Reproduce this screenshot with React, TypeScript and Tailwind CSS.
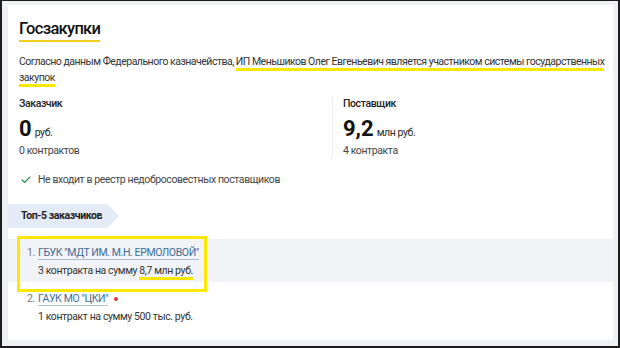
import { Check } from "lucide-react";

const customers = [
  { n: 1, name: "ГБУК \"МДТ ИМ. М.Н. ЕРМОЛОВОЙ\"", pre: "3 контракта на сумму ", sum: "8,7 млн руб.", marked: true },
  { n: 2, name: "ГАУК МО \"ЦКИ\"", pre: "1 контракт на сумму ", sum: "500 тыс. руб.", marked: false },
];

const App = () => {
  return (
    <div
      className="w-[620px] h-[348px] overflow-hidden bg-[#eef0f3] border-l-2 border-r-2 border-t border-b-2 border-[#1c1c1c] pl-[6px] pr-[5px] pt-[4px] text-[#2a2a2a] text-[10.5px] tracking-[-0.4px]"
      style={{ fontFamily: "Roboto, 'Liberation Sans', sans-serif" }}
    >
      <div className="bg-white h-[335px]">
        {/* Title */}
        <div className="pl-[11px] pt-[14px]">
          <h1 className="inline-block text-[16.5px] leading-[20px] tracking-[-0.7px] font-medium text-[#111] border-b-2 border-[#f2cf1d] pb-[1px]">
            Госзакупки
          </h1>
        </div>

        {/* Intro text */}
        <p className="pl-[11px] mt-[12px] leading-[16px] tracking-[-0.5px] text-[#333]">
          Согласно данным Федерального казначейства,{" "}
          <span className="border-b-[3px] border-[#f8e800]">
            ИП Меньшиков Олег Евгеньевич является участником системы государственных закупок
          </span>
        </p>

        {/* Stats */}
        <div className="flex mt-[11px]">
          <div className="w-[325px] pl-[11px] border-r border-[#eceef1]">
            <div className="leading-[14px] font-medium text-[#222]">Заказчик</div>
            <div className="mt-[6px] h-[24px] flex items-baseline gap-[3px]">
              <span className="text-[22px] leading-[24px] font-bold tracking-normal text-[#111]">0</span>
              <span>руб.</span>
            </div>
            <div className="mt-[3px] leading-[14px] text-[#444]">0 контрактов</div>
          </div>
          <div className="pl-[10px]">
            <div className="leading-[14px] font-medium text-[#222]">Поставщик</div>
            <div className="mt-[6px] h-[24px] flex items-baseline gap-[3px]">
              <span className="text-[22px] leading-[24px] font-bold tracking-normal text-[#111]">9,2</span>
              <span>млн руб.</span>
            </div>
            <div className="mt-[3px] leading-[14px] text-[#444]">4 контракта</div>
          </div>
        </div>

        {/* Registry */}
        <div className="flex items-center gap-[6px] pl-[12px] mt-[15px] leading-[14px] text-[#444]">
          <Check size={12} strokeWidth={2.2} className="text-[#2f8a4e]" />
          Не входит в реестр недобросовестных поставщиков
        </div>

        {/* Tab */}
        <div className="mt-[17px] flex">
          <div className="flex h-[24px]">
            <div className="bg-[#e3ecf6] pl-[13px] pr-[5px] flex items-center font-bold text-[#222]">
              Топ-5 заказчиков
            </div>
            <div className="w-0 h-0 border-t-[12px] border-b-[12px] border-l-[12px] border-t-transparent border-b-transparent border-l-[#e3ecf6]" />
          </div>
        </div>

        {/* List */}
        <div className="mt-[11px]">
          {customers.map((c) => (
            <div key={c.n} className={c.marked ? "relative bg-[#f1f3f6] h-[43px] pt-[6px]" : "pt-[9px]"}>
              {c.marked && (
                <div className="absolute left-[9px] top-[-3px] w-[190px] h-[56px] border-[3px] border-[#ffe800]" />
              )}
              <div className="relative pl-[19px] leading-[16px]">
                <div className="flex items-center">
                  <span className="w-[11px] text-[#777]">{c.n}.</span>
                  <span className="text-[#3f6c98] border-b border-[#a9bdd0] leading-[13px]">{c.name}</span>
                  {!c.marked && <span className="ml-[6px] w-[4px] h-[4px] rounded-full bg-[#d33]" />}
                </div>
                <div className="pl-[11px] mt-[2px] text-[#333]">
                  {c.pre}
                  <span className={c.marked ? "border-b-[3px] border-[#f8e800]" : ""}>{c.sum}</span>
                </div>
              </div>
            </div>
          ))}
        </div>
      </div>
    </div>
  );
};

export default App;
